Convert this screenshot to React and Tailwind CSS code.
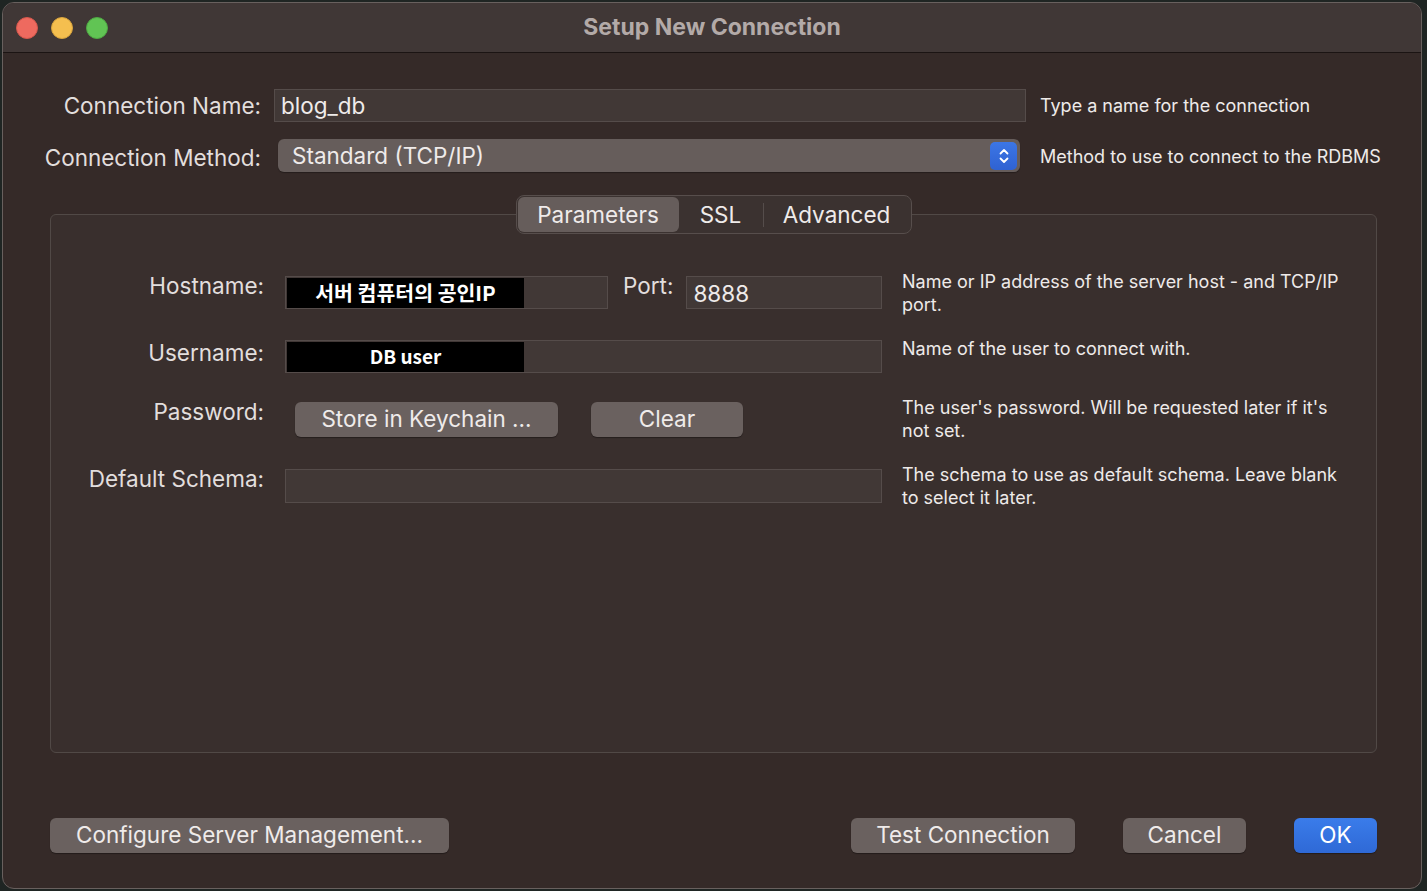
// Setup New Connection dialog (dark macOS style)

const FONT = { fontFamily: 'Inter, "Liberation Sans", sans-serif' };

function TrafficLights() {
  return (
    <div className="flex items-center gap-[13px] pl-[13px]">
      <span className="block w-[22px] h-[22px] rounded-full bg-[#ee6a5f] border border-[#d5574c]" />
      <span className="block w-[22px] h-[22px] rounded-full bg-[#f5bf4f] border border-[#d9a43c]" />
      <span className="block w-[22px] h-[22px] rounded-full bg-[#61c454] border border-[#4ea943]" />
    </div>
  );
}

function TextField({ className = "", children }) {
  return (
    <div
      className={
        "h-[33px] bg-[#413836] border border-[#554c4a] flex items-center " +
        className
      }
    >
      {children}
    </div>
  );
}

function Button({ className = "", children, primary }) {
  return (
    <button
      type="button"
      className={
        "h-[35px] rounded-[6px] text-[22.5px] leading-none flex items-center justify-center shadow-[0_1px_1px_rgba(0,0,0,0.35)] " +
        (primary
          ? "bg-gradient-to-b from-[#3a7cea] to-[#2f69d6] text-white"
          : "bg-[#6a615f] text-[#efebea]") +
        " " +
        className
      }
    >
      {children}
    </button>
  );
}

function Masked({ children, className = "" }) {
  return (
    <div
      className={
        "ml-[1px] h-[30px] w-[237px] bg-black text-white font-bold flex items-center justify-center " +
        className
      }
      style={{ fontFamily: '"Noto Sans CJK KR", "Noto Sans", sans-serif' }}
    >
      {children}
    </div>
  );
}

function Help({ children }) {
  return (
    <p className="ml-[20px] mt-[-6px] w-[470px] text-[18px] leading-[23px] text-[#eeeae9]">
      {children}
    </p>
  );
}

function Label({ children, className = "" }) {
  return (
    <span
      className={
        "w-[213px] shrink-0 text-right text-[22.5px] leading-[24px] mt-[-2px] text-[#e2dedd] " +
        className
      }
    >
      {children}
    </span>
  );
}

function Stepper() {
  return (
    <span className="w-[27px] h-[28px] rounded-[5px] bg-gradient-to-b from-[#3c76e6] to-[#2f62d2] flex items-center justify-center">
      <svg width="12" height="18" viewBox="0 0 12 18" fill="none">
        <path
          d="M2.5 6.5 L6 3 L9.5 6.5"
          stroke="white"
          strokeWidth="1.8"
          strokeLinecap="round"
          strokeLinejoin="round"
        />
        <path
          d="M2.5 11.5 L6 15 L9.5 11.5"
          stroke="white"
          strokeWidth="1.8"
          strokeLinecap="round"
          strokeLinejoin="round"
        />
      </svg>
    </span>
  );
}

function Tabs() {
  return (
    <div className="relative z-10 mx-auto h-[39px] w-[396px] rounded-[8px] border border-[#574e4c] bg-[#3b3230] flex items-center px-[1px] text-[22.5px] text-[#efebea]">
      <span className="h-[35px] w-[161px] rounded-[6px] bg-[#665d5b] flex items-center justify-center">
        Parameters
      </span>
      <span className="w-[84px] flex items-center justify-center">SSL</span>
      <span className="w-px h-[24px] bg-[#554d4b]" />
      <span className="flex-1 flex items-center justify-center">Advanced</span>
    </div>
  );
}

export default function App() {
  return (
    <div
      className="w-[1427px] h-[891px] bg-[#1f2523] pt-[2px] pl-[2px] pr-[5px] pb-[2px]"
      style={FONT}
    >
      <div className="h-full rounded-[12px] border border-[#68605e] overflow-hidden flex flex-col bg-[#352a28]">
        {/* title bar */}
        <div className="relative h-[50px] shrink-0 bg-[#403736] border-b border-[#1b1413] flex items-center">
          <TrafficLights />
          <span className="absolute inset-x-0 text-center text-[23px] font-bold text-[#b3aaa8]">
            Setup New Connection
          </span>
        </div>

        {/* body */}
        <div className="flex-1 flex flex-col pt-[36px]">
          <div className="flex items-center h-[33px]">
            <span className="w-[258px] text-right text-[22.5px] text-[#e2dedd]">
              Connection Name:
            </span>
            <TextField className="ml-[13px] w-[752px] pl-[6px]">
              <span className="text-[22.5px] text-[#efebea]">blog_db</span>
            </TextField>
            <span className="ml-[14px] text-[18px] text-[#eeeae9]">
              Type a name for the connection
            </span>
          </div>

          <div className="flex items-center h-[33px] mt-[17px]">
            <span className="w-[258px] text-right text-[22.5px] text-[#e2dedd] pt-[4px]">
              Connection Method:
            </span>
            <div className="ml-[17px] w-[742px] h-[33px] rounded-[6px] bg-[#665d5b] shadow-[0_1px_1px_rgba(0,0,0,0.3)] flex items-center justify-between pl-[14px] pr-[3px]">
              <span className="text-[22.5px] text-[#efebea]">Standard (TCP/IP)</span>
              <Stepper />
            </div>
            <span className="ml-[20px] text-[18px] text-[#eeeae9] pt-[2px]">
              Method to use to connect to the RDBMS
            </span>
          </div>

          {/* group */}
          <div className="ml-[47px] mr-[44px] mt-[23px] flex flex-col">
            <Tabs />
            <div className="mt-[-20px] h-[539px] rounded-[6px] border border-[#514946] bg-[#392f2d] pt-[61px]">
              <div className="flex items-start h-[64px]">
                <Label>Hostname:</Label>
                <div className="ml-[21px] w-[597px] flex items-start">
                  <TextField className="w-[323px]">
                    <Masked className="text-[20.5px]">서버 컴퓨터의 공인IP</Masked>
                  </TextField>
                  <span className="ml-[15px] mt-[-2px] text-[22.5px] leading-[24px] text-[#e2dedd]">
                    Port:
                  </span>
                  <TextField className="ml-[13px] flex-1 pl-[6px] pt-[3px]">
                    <span className="text-[22.5px] text-[#efebea]">8888</span>
                  </TextField>
                </div>
                <Help>
                  Name or IP address of the server host - and TCP/IP
                  <br />
                  port.
                </Help>
              </div>

              <div className="flex items-start h-[62px]">
                <Label className="mt-[1px]">Username:</Label>
                <div className="ml-[21px] w-[597px]">
                  <TextField>
                    <Masked className="text-[19px]">DB user</Masked>
                  </TextField>
                </div>
                <Help>
                  <span className="block mt-[3px]">Name of the user to connect with.</span>
                </Help>
              </div>

              <div className="flex items-start h-[67px]">
                <Label>Password:</Label>
                <div className="ml-[21px] w-[597px] flex">
                  <Button className="ml-[10px] w-[263px]">Store in Keychain ...</Button>
                  <Button className="ml-[33px] w-[152px]">Clear</Button>
                </div>
                <Help>
                  The user's password. Will be requested later if it's
                  <br />
                  not set.
                </Help>
              </div>

              <div className="flex items-start">
                <Label>Default Schema:</Label>
                <div className="ml-[21px] w-[597px]">
                  <TextField className="h-[34px]" />
                </div>
                <Help>
                  The schema to use as default schema. Leave blank
                  <br />
                  to select it later.
                </Help>
              </div>
            </div>
          </div>

          {/* footer buttons */}
          <div className="ml-[47px] mr-[44px] mt-[65px] flex items-center">
            <Button className="w-[399px]">Configure Server Management...</Button>
            <div className="ml-auto flex items-center gap-[48px]">
              <Button className="w-[224px]">Test Connection</Button>
              <Button className="w-[123px]">Cancel</Button>
              <Button primary className="w-[83px]">
                OK
              </Button>
            </div>
          </div>
        </div>
      </div>
    </div>
  );
}
